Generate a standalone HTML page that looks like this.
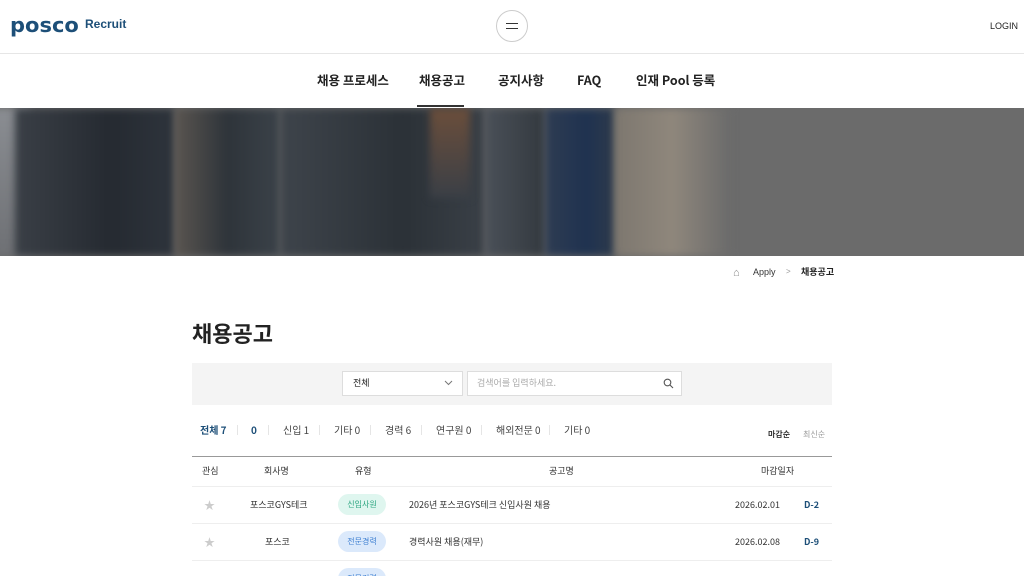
<!DOCTYPE html>
<html><head><meta charset="utf-8"><style>
*{margin:0;padding:0;box-sizing:border-box}
html,body{width:1024px;height:576px;overflow:hidden}
body{background:#fff;font-family:"Liberation Sans","Noto Sans CJK KR",sans-serif;color:#222;position:relative}
.abs{position:absolute;line-height:12px;white-space:nowrap}
.hdr{top:0;left:0;width:1024px;height:54px;border-bottom:1px solid #e6e6e6}
.nav span{position:absolute;top:73px;font-size:12.5px;line-height:14px;font-weight:bold;color:#222;font-family:"Noto Sans CJK KR","Liberation Sans",sans-serif}
.banner{top:108px;left:0;width:1024px;height:148px;background:#6b6b6b;overflow:hidden}
.b{position:absolute;top:0;height:148px;filter:blur(4px)}
.c{font-size:9px;line-height:12px;color:#333;position:absolute;white-space:nowrap;font-family:"Noto Sans CJK KR","Liberation Sans",sans-serif}
.tab{position:absolute;top:424px;font-size:10px;line-height:12px;color:#444;font-family:"Noto Sans CJK KR","Liberation Sans",sans-serif}
.sep{position:absolute;top:425px;width:1px;height:10px;background:#e5e5e5}
.row{position:absolute;left:192px;width:640px;height:37px;border-bottom:1px solid #eee}
.pill{position:absolute;width:48px;height:21px;border-radius:11px;font-size:8px;text-align:center;line-height:21px;font-family:"Noto Sans CJK KR",sans-serif}
</style></head><body>
<div class="abs hdr"></div>
<div class="abs" style="left:10px;top:14px;font-size:20px;line-height:22px;font-weight:bold;color:#1d4f78;font-family:'DejaVu Sans',sans-serif;transform:scaleX(1.05);transform-origin:left">posco</div>
<div class="abs" style="left:85px;top:18px;font-size:12px;font-weight:bold;color:#1d4f78">Recruit</div>
<div class="abs" style="left:496px;top:10px;width:32px;height:32px;border:1px solid #ccc;border-radius:50%"></div>
<div class="abs" style="left:506px;top:23px;width:12px;height:1.2px;background:#333"></div>
<div class="abs" style="left:506px;top:28px;width:12px;height:1.2px;background:#333"></div>
<div class="abs" style="left:990px;top:20px;font-size:9px;color:#222">LOGIN</div>
<div class="nav">
<span style="left:317px">채용 프로세스</span>
<span style="left:419px">채용공고</span>
<span style="left:498px">공지사항</span>
<span style="left:577px">FAQ</span>
<span style="left:636px">인재 Pool 등록</span>
</div>
<div class="abs" style="left:417px;top:105px;width:47px;height:2px;background:#333"></div>
<div class="abs banner">
<div class="b" style="left:-10px;width:40px;background:linear-gradient(#8a8d92,#6e7074)"></div>
<div class="b" style="left:15px;width:160px;background:linear-gradient(90deg,#3a3f46,#252a31 60%,#2e343c)"></div>
<div class="b" style="left:175px;width:105px;background:linear-gradient(90deg,#5a5550,#2e343a 50%,#3b4249)"></div>
<div class="b" style="left:280px;width:205px;background:linear-gradient(90deg,#3e444b,#2b3137 60%,#3a4047)"></div>
<div class="b" style="left:430px;width:40px;height:90px;background:linear-gradient(#6b4e3b,#3a3f46)"></div>
<div class="b" style="left:485px;width:60px;background:linear-gradient(90deg,#4a5058,#33393f)"></div>
<div class="b" style="left:545px;width:70px;background:linear-gradient(90deg,#2e3c52,#1f3250 60%,#2d3a4b)"></div>
<div class="b" style="left:615px;width:115px;background:linear-gradient(90deg,#7d776f,#8f877c 50%,#6b6b6b)"></div>
</div>
<div class="abs" style="left:733px;top:267px;font-size:11px;color:#888">⌂</div>
<div class="abs" style="left:753px;top:266px;font-size:9px;color:#333">Apply</div>
<div class="abs" style="left:786px;top:266px;font-size:8px;color:#999">&gt;</div>
<div class="c" style="left:801px;top:266px;font-weight:bold;color:#222">채용공고</div>
<div class="abs" style="left:192px;top:319px;font-size:22px;line-height:28px;font-weight:bold;color:#222;font-family:'Noto Sans CJK KR',sans-serif">채용공고</div>
<div class="abs" style="left:192px;top:363px;width:640px;height:42px;background:#f4f4f4"></div>
<div class="abs" style="left:342px;top:371px;width:121px;height:25px;background:#fff;border:1px solid #ddd"></div>
<div class="c" style="left:353px;top:377px;color:#222">전체</div>
<svg class="abs" style="left:444px;top:380px" width="9" height="6"><path d="M1 1L4.5 4.5L8 1" fill="none" stroke="#777"/></svg>
<div class="abs" style="left:467px;top:371px;width:215px;height:25px;background:#fff;border:1px solid #ddd"></div>
<div class="c" style="left:477px;top:377px;color:#aaa">검색어를 입력하세요.</div>
<svg class="abs" style="left:663px;top:378px" width="11" height="11"><circle cx="4.5" cy="4.5" r="3.3" fill="none" stroke="#555" stroke-width="1.1"/><line x1="7" y1="7" x2="10" y2="10" stroke="#555" stroke-width="1.1"/></svg>
<span class="tab" style="left:200px;color:#1d4f78;font-weight:bold">전체 7</span>
<span class="sep" style="left:237px"></span>
<span class="tab" style="left:251px;color:#1d4f78;font-weight:bold">0</span>
<span class="sep" style="left:268px"></span>
<span class="tab" style="left:283px">신입 1</span>
<span class="sep" style="left:319px"></span>
<span class="tab" style="left:334px">기타 0</span>
<span class="sep" style="left:370px"></span>
<span class="tab" style="left:385px">경력 6</span>
<span class="sep" style="left:421px"></span>
<span class="tab" style="left:436px">연구원 0</span>
<span class="sep" style="left:481px"></span>
<span class="tab" style="left:496px">해외전문 0</span>
<span class="sep" style="left:549px"></span>
<span class="tab" style="left:564px">기타 0</span>
<div class="c" style="left:768px;top:429px;font-size:8px;color:#333;font-weight:bold">마감순</div>
<div class="c" style="left:803px;top:429px;font-size:8px;color:#999">최신순</div>
<div class="abs" style="left:192px;top:456px;width:640px;height:1px;background:#999"></div>
<div class="row" style="top:457px;height:30px"></div>
<div class="c" style="left:202px;top:465px">관심</div>
<div class="c" style="left:264px;top:465px">회사명</div>
<div class="c" style="left:355px;top:465px">유형</div>
<div class="c" style="left:549px;top:465px">공고명</div>
<div class="c" style="left:761px;top:465px">마감일자</div>
<div class="row" style="top:487px"></div>
<div class="c" style="left:204px;top:499px;color:#ccc;font-size:11px">★</div>
<div class="c" style="left:250px;top:499px">포스코GYS테크</div>
<div class="pill" style="left:338px;top:494px;background:#dff6ef;color:#2aa57f">신입사원</div>
<div class="c" style="left:409px;top:499px">2026년 포스코GYS테크 신입사원 채용</div>
<div class="c" style="left:735px;top:499px">2026.02.01</div>
<div class="c" style="left:804px;top:499px;color:#1d4f78;font-weight:bold">D-2</div>
<div class="row" style="top:524px"></div>
<div class="c" style="left:204px;top:536px;color:#ccc;font-size:11px">★</div>
<div class="c" style="left:265px;top:536px">포스코</div>
<div class="pill" style="left:338px;top:531px;background:#dbe9fb;color:#3d7fd1">전문경력</div>
<div class="c" style="left:409px;top:536px">경력사원 채용(재무)</div>
<div class="c" style="left:735px;top:536px">2026.02.08</div>
<div class="c" style="left:804px;top:536px;color:#1d4f78;font-weight:bold">D-9</div>
<div class="pill" style="left:338px;top:568px;background:#dbe9fb;color:#3d7fd1">전문경력</div>
</body></html>
